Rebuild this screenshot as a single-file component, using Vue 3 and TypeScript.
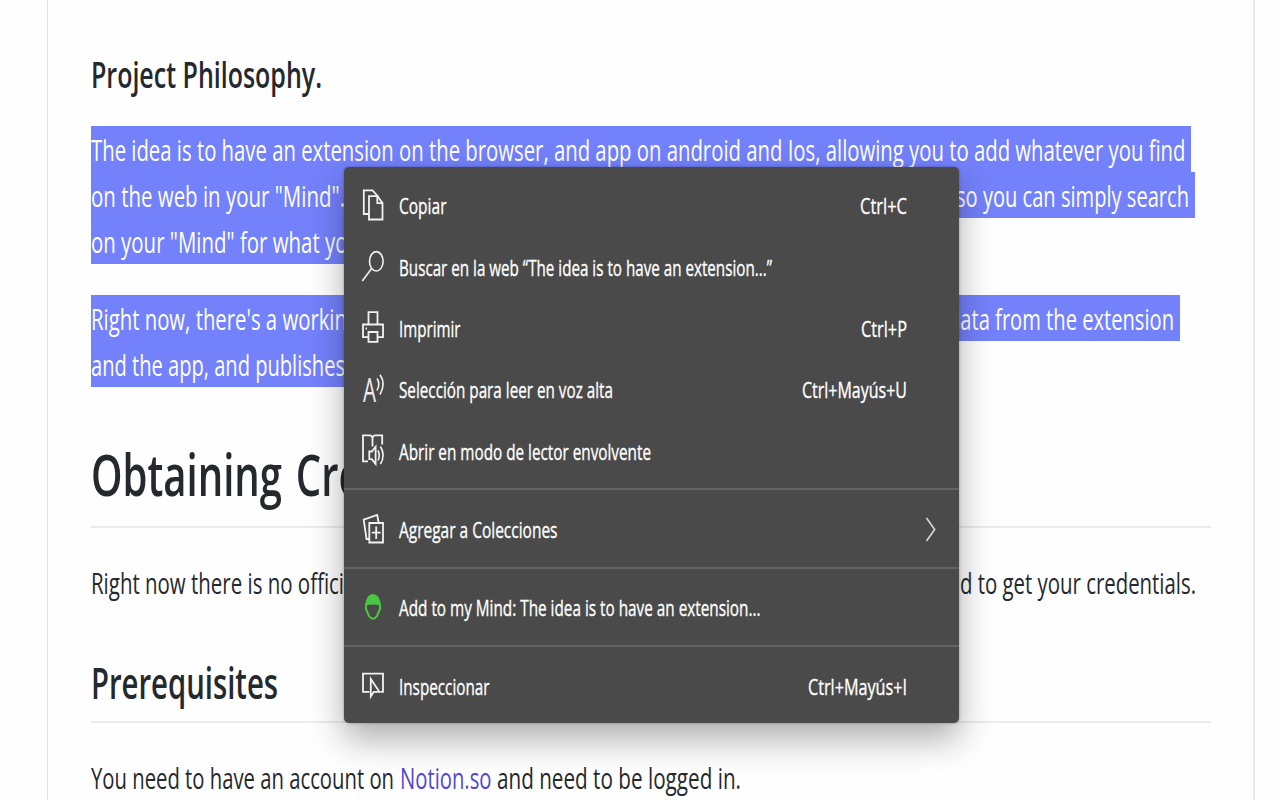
<script setup lang="ts">
import type { Directive } from 'vue'

// Condenses a run of text horizontally so that it takes exactly the given width.
const vFit: Directive<HTMLElement, number> = {
  mounted(el, { value }) {
    const natural = el.getBoundingClientRect().width
    el.style.transform = `scaleX(${value / natural})`
    el.style.marginRight = `${value - natural}px`
  },
}

interface Item {
  icon: string
  label: string
  width: number
  keys?: string
  keysWidth?: number
  submenu?: boolean
}

const groups: Item[][] = [
  [
    { icon: 'copy', label: 'Copiar', width: 47.5, keys: 'Ctrl+C', keysWidth: 47 },
    { icon: 'search', label: 'Buscar en la web “The idea is to have an extension...”', width: 373 },
    { icon: 'print', label: 'Imprimir', width: 61.5, keys: 'Ctrl+P', keysWidth: 46 },
    { icon: 'speak', label: 'Selección para leer en voz alta', width: 214, keys: 'Ctrl+Mayús+U', keysWidth: 105 },
    { icon: 'reader', label: 'Abrir en modo de lector envolvente', width: 252 },
  ],
  [{ icon: 'collections', label: 'Agregar a Colecciones', width: 158.5, submenu: true }],
  [{ icon: 'mind', label: 'Add to my Mind: The idea is to have an extension...', width: 361.5 }],
  [{ icon: 'inspect', label: 'Inspeccionar', width: 90.5, keys: 'Ctrl+Mayús+I', keysWidth: 99 }],
]
</script>

<template>
  <div class="page">
    <article class="readme">
      <h3><span v-fit="231" class="fit">Project Philosophy.</span></h3>

      <div class="selection first">
        <div class="line l1"><span v-fit="1094.5" class="fit">The idea is to have an extension on the browser, and app on android and Ios, allowing you to add whatever you find</span></div>
        <div class="line l2">
          <span v-fit="254" class="fit">on the web in your "Mind".</span>
          <span v-fit="233" class="fit">so you can simply search</span>
        </div>
        <div class="line l3"><span v-fit="269" class="fit">on your "Mind" for what you</span></div>
      </div>

      <div class="selection second">
        <div class="line l4">
          <span v-fit="267" class="fit">Right now, there's a working</span>
          <span v-fit="226" class="fit">data from the extension</span>
        </div>
        <div class="line l5"><span v-fit="254" class="fit">and the app, and publishes</span></div>
      </div>

      <h1><span v-fit="425" class="fit">Obtaining Credentials</span></h1>

      <p class="split">
        <span v-fit="253" class="fit">Right now there is no offici</span>
        <span v-fit="236" class="fit">d to get your credentials.</span>
      </p>

      <h2><span v-fit="187" class="fit">Prerequisites</span></h2>

      <p class="account">
        <span v-fit="303" class="fit">You need to have an account on</span>
        <a v-fit="91.5" class="fit">Notion.so</a>
        <span v-fit="244" class="fit">and need to be logged in.</span>
      </p>
    </article>

    <div class="menu">
      <div v-for="(group, g) in groups" :key="g" class="group">
        <div v-for="item in group" :key="item.icon" class="item">
          <svg class="icon" width="24" height="36" viewBox="0 0 24 36">
            <g v-if="item.icon === 'copy'">
              <path d="M8 26H2.8V2.3H11.5L17 8.5" />
              <path d="M8 8.2H16.5L21.5 15V31.5H8ZM16.3 8.2V15.2H21.5" />
            </g>
            <g v-else-if="item.icon === 'search'" class="thin">
              <ellipse cx="15.3" cy="12.3" rx="6.8" ry="9.7" />
              <path d="M10.6 19.6L1.3 32" />
            </g>
            <g v-else-if="item.icon === 'print'">
              <path d="M7.5 14.5V2.2H16.5V14.5M7.5 27.2H2V14.5H22V27.2H16.5M7.5 22H16.5V31.8H7.5Z" />
              <path d="M4.6 18.5H6" />
            </g>
            <g v-else-if="item.icon === 'speak'">
              <text x="2" y="30" textLength="13" lengthAdjust="spacingAndGlyphs">A</text>
              <path class="thin" d="M16 6.5Q19.6 11.5 16 18.5M19 2.8Q25.2 11.5 19 22.5" />
            </g>
            <g v-else-if="item.icon === 'reader'">
              <path d="M7 28.3H2V2.3H8.5Q11.5 2.3 11.5 6Q11.5 2.3 14.5 2.3H21.2V11.5M11.5 5V13.5" />
              <path d="M8.3 18.5H10.8L14.6 13.8V31L10.8 26.2H8.3Z" />
              <path class="thin" d="M16.9 17.3Q19.6 22.3 16.9 27.5M19.4 13.5Q24.8 22.3 19.4 31" />
            </g>
            <g v-else-if="item.icon === 'collections'">
              <path d="M8 28H5.5L2.7 8.7L16.2 4L17.6 11.5" />
              <path d="M8.3 12H22V31.5H8.3ZM15.2 15.5V28M10.8 21.7H19.6" />
            </g>
            <g v-else-if="item.icon === 'mind'" class="mind">
              <path class="cap" d="M4 15.3Q5.5 4 12 4Q18.5 4 20 15.3Q12 13.5 4 15.3Z" />
              <path d="M5.5 12.5L4.8 18.5L8 26Q12 31.5 16 26L19.2 18.5L18.5 12.5" />
            </g>
            <g v-else>
              <path d="M8.5 23.8H2V5.6H22V23.8H19.5" />
              <path d="M9.8 11V28.5L12.8 23.8H18.4Z" />
            </g>
          </svg>
          <span v-fit="item.width" class="fit label">{{ item.label }}</span>
          <span v-if="item.keys" v-fit="item.keysWidth ?? 0" class="fit keys">{{ item.keys }}</span>
          <svg v-if="item.submenu" class="chevron" width="12" height="26" viewBox="0 0 12 26">
            <path d="M1.5 1L9.7 12.5L1.5 24" />
          </svg>
        </div>
      </div>
    </div>
  </div>
</template>

<style>
body {
  margin: 0;
  background: #fff;
}
</style>

<style scoped>
.page {
  position: relative;
  width: 1280px;
  height: 800px;
  overflow: hidden;
  background: #fefefe;
  color: #24292e;
  font-family: 'Open Sans', 'Noto Sans', sans-serif;
}

.fit {
  display: inline-block;
  flex: none;
  white-space: nowrap;
  transform-origin: 0 50%;
}

.readme {
  box-sizing: border-box;
  width: 1208px;
  height: 800px;
  margin-left: 47px;
  padding: 50px 43px 0;
  border-left: 1px solid #dfe1e4;
  border-right: 2px solid #e7e8ec;
}

h1,
h2,
h3,
p {
  margin: 0;
}

h3 {
  height: 50px;
  font-size: 36.5px;
  line-height: 49px;
  font-weight: 600;
}

h1 .fit,
h2 .fit,
h3 .fit,
.line .fit:first-child,
.split .fit {
  margin-left: -0.5px;
}

.selection {
  color: #fff;
  font-size: 29.5px;
}

.first {
  margin-top: 26px;
}

.second {
  margin-top: 31px;
}

.line {
  display: flex;
  justify-content: space-between;
  box-sizing: border-box;
  height: 46px;
  line-height: 48px;
  background: #7381fb;
}

.l1 {
  width: 1100px;
}

.l2 {
  width: 1104px;
  padding-right: 6px;
}

.l3 {
  width: 275px;
}

.l4 {
  width: 1089px;
  padding-right: 6px;
}

.l5 {
  width: 275px;
}

h1,
h2 {
  box-sizing: border-box;
  width: 1120px;
  border-bottom: 2px solid #eaebef;
  font-weight: 600;
}

h1 {
  height: 92px;
  margin-top: 49px;
  font-size: 58.5px;
  line-height: 75px;
  word-spacing: 5px;
}

.split {
  display: flex;
  justify-content: space-between;
  width: 1105px;
  height: 46px;
  margin-top: 32px;
  font-size: 29.5px;
  line-height: 45px;
}

h2 {
  height: 72px;
  margin-top: 45px;
  font-size: 44px;
  line-height: 63px;
}

.account {
  display: flex;
  gap: 6px;
  margin-top: 32px;
  margin-left: -0.5px;
  font-size: 29.5px;
  line-height: 45px;
}

.account a {
  color: #5348cf;
}

.menu {
  position: absolute;
  left: 344px;
  top: 167px;
  box-sizing: border-box;
  width: 615px;
  height: 556px;
  padding-top: 8.7px;
  border-radius: 5px;
  background: #4a4a4a;
  color: #fff;
  box-shadow:
    0 0 3px rgba(0, 0, 0, 0.3),
    0 16px 34px rgba(0, 0, 0, 0.32);
}

.group + .group {
  margin-top: 6px;
  padding-top: 9.1px;
  border-top: 2px solid #636363;
}

.item {
  display: flex;
  align-items: center;
  height: 61.3px;
  padding: 0 52px 0 17px;
}

.icon {
  flex: none;
  margin-right: 14px;
  margin-top: -1px;
  overflow: visible;
  fill: none;
  stroke: #f2f2f2;
  stroke-width: 1.8;
}

.icon .thin {
  stroke-width: 1.6;
}

.icon text {
  fill: #eee;
  stroke: none;
  font-size: 33px;
  font-weight: 400;
}

.mind {
  stroke: #48c742;
  stroke-width: 2;
}

.mind .cap {
  fill: #48c742;
  stroke: none;
}

.label,
.keys {
  font-size: 22.5px;
  line-height: 32px;
  -webkit-text-stroke: 0.35px #fff;
}

.keys {
  margin-left: auto;
}

.chevron {
  flex: none;
  margin-left: auto;
  margin-right: -30px;
  fill: none;
  stroke: #d8d8d8;
  stroke-width: 1.6;
}
</style>
